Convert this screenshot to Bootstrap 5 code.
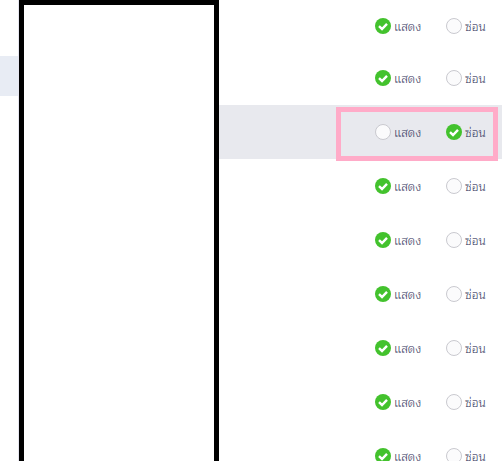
<!DOCTYPE html>
<html lang="th">
<head>
    <meta charset="UTF-8">
    <meta name="viewport" content="width=device-width, initial-scale=1.0">
    <title>แสดง / ซ่อน</title>
    <link href="https://cdn.jsdelivr.net/npm/bootstrap@5.3.0/dist/css/bootstrap.min.css" rel="stylesheet">
    <style>
        html, body { height: 461px; overflow: hidden; background: #fff; }
        body { font-family: "Noto Sans Thai Looped", "Liberation Sans", serif; font-size: 12px; font-weight: 300; color: #33365c; }
        .page-wrap { height: 461px; position: relative; overflow: hidden; }
        .side-col { width: 19px; border-right: 1px solid #e6e6f0; padding-top: 56px; flex: none; }
        .side-active { height: 40px; background: #e8ecf4; }
        .setting-row { height: 54px; padding-right: 15px; }
        .setting-row:first-child { height: 51px; }
        .setting-row.is-on { background: #e8e9ee; }
        .opt { width: 71px; gap: 3px; line-height: 16px; }
        .opt:last-child { width: 41px; }
        .tick { width: 16px; height: 16px; flex: none; }
        .mark-black { position: absolute; left: 19px; top: 0; width: 200px; height: 480px; border: 5px solid #000; background: #fff; }
        .mark-pink { position: absolute; left: 336px; top: 107px; width: 162px; height: 54px; border: 5px solid #ffabc8; }
    </style>
</head>
<body>
    <svg class="d-none">
        <symbol id="on" viewBox="0 0 16 16">
            <circle cx="8" cy="8" r="8" fill="#43c22d"/>
            <path d="M4 8.2 7 11 12 5.8" fill="none" stroke="#fff" stroke-width="2.4"/>
        </symbol>
        <symbol id="off" viewBox="0 0 16 16">
            <circle cx="8" cy="8" r="7.5" fill="#fbfbfc" stroke="#c9c9cf"/>
        </symbol>
    </svg>

    <div class="page-wrap d-flex">
        <div class="side-col"><div class="side-active"></div></div>
        <div id="rows" class="flex-grow-1"></div>
        <div class="mark-black"></div>
        <div class="mark-pink"></div>
    </div>

    <script src="https://cdn.jsdelivr.net/npm/bootstrap@5.3.0/dist/js/bootstrap.bundle.min.js"></script>
    <script>
        // row 3 is the one switched to hidden
        const rows = document.getElementById('rows');
        for (let i = 0; i < 9; i++) {
            const hidden = i === 2;
            const row = document.createElement('div');
            row.className = 'setting-row d-flex justify-content-end align-items-center' + (hidden ? ' is-on' : '');
            row.innerHTML = `
                <div class="opt d-flex align-items-center"><svg class="tick"><use href="#${hidden ? 'off' : 'on'}"/></svg><span>แสดง</span></div>
                <div class="opt d-flex align-items-center"><svg class="tick"><use href="#${hidden ? 'on' : 'off'}"/></svg><span>ซ่อน</span></div>
            `;
            rows.appendChild(row);
        }
    </script>
</body>
</html>
